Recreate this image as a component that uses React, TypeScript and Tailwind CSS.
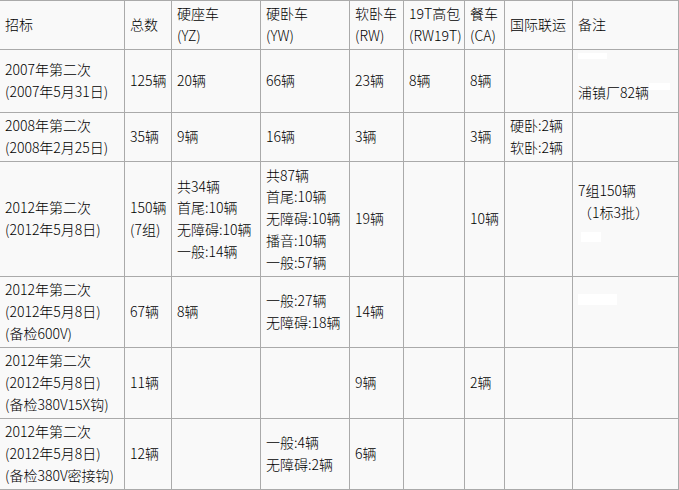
import React from 'react';

type Row = {
  h: string;
  cells: React.ReactNode[];
};

const Lines = ({ items }: { items: string[] }) => (
  <>
    {items.map((t, i) => (
      <div key={i}>{t}</div>
    ))}
  </>
);

const Blank = ({ className }: { className: string }) => <span className={`block bg-white ${className}`} />;

const headers: string[][] = [
  ['招标'],
  ['总数'],
  ['硬座车', '(YZ)'],
  ['硬卧车', '(YW)'],
  ['软卧车', '(RW)'],
  ['19T高包', '(RW19T)'],
  ['餐车', '(CA)'],
  ['国际联运'],
  ['备注'],
];

const rows: Row[] = [
  {
    h: 'h-[63px]',
    cells: [
      <Lines items={['2007年第二次', '(2007年5月31日)']} />,
      '125辆',
      '20辆',
      '66辆',
      '23辆',
      '8辆',
      '8辆',
      '',
      <div className="flex flex-col pb-[6px]">
        <Blank className="w-[29px] h-[6px] mb-[23px]" />
        <div className="flex items-start">
          <span>浦镇厂82辆</span>
          <Blank className="w-[21px] h-[7px] mt-[1px]" />
        </div>
      </div>,
    ],
  },
  {
    h: 'h-[49px]',
    cells: [
      <Lines items={['2008年第二次', '(2008年2月25日)']} />,
      '35辆',
      '9辆',
      '16辆',
      '3辆',
      '',
      '3辆',
      <Lines items={['硬卧:2辆', '软卧:2辆']} />,
      '',
    ],
  },
  {
    h: 'h-[115px]',
    cells: [
      <Lines items={['2012年第二次', '(2012年5月8日)']} />,
      <Lines items={['150辆', '(7组)']} />,
      <Lines items={['共34辆', '首尾:10辆', '无障碍:10辆', '一般:14辆']} />,
      <Lines items={['共87辆', '首尾:10辆', '无障碍:10辆', '播音:10辆', '一般:57辆']} />,
      '19辆',
      '',
      '10辆',
      '',
      <div className="flex flex-col pb-[16px]">
        <div>7组150辆</div>
        <div>（1标3批）</div>
        <Blank className="w-[20px] h-[10px] mt-[9px] ml-[3px]" />
      </div>,
    ],
  },
  {
    h: 'h-[71px]',
    cells: [
      <Lines items={['2012年第二次', '(2012年5月8日)', '(备检600V)']} />,
      '67辆',
      '8辆',
      <Lines items={['一般:27辆', '无障碍:18辆']} />,
      '14辆',
      '',
      '',
      '',
      <div className="flex flex-col pb-[25px]">
        <Blank className="w-[39px] h-[11px]" />
      </div>,
    ],
  },
  {
    h: 'h-[71px]',
    cells: [
      <Lines items={['2012年第二次', '(2012年5月8日)', '(备检380V15X钩)']} />,
      '11辆',
      '',
      '',
      '9辆',
      '',
      '2辆',
      '',
      '',
    ],
  },
  {
    h: 'h-[71px]',
    cells: [
      <Lines items={['2012年第二次', '(2012年5月8日)', '(备检380V密接钩)']} />,
      '12辆',
      '',
      <Lines items={['一般:4辆', '无障碍:2辆']} />,
      '6辆',
      '',
      '',
      '',
      '',
    ],
  },
];

const widths = ['w-[125px]', 'w-[47px]', 'w-[89px]', 'w-[89px]', 'w-[54px]', 'w-[61px]', 'w-[40px]', 'w-[68px]', 'w-[106px]'];

export default function App() {
  return (
    <div
      className="w-[679px] h-[490px] overflow-hidden bg-[#f9f9f9] text-black text-[14px] leading-[21.7px] font-light"
      style={{ fontFamily: '"Noto Sans CJK SC", "Liberation Sans", sans-serif' }}
    >
      <table className="table-fixed border-collapse ml-[-1px] w-[680px]">
        <colgroup>
          {widths.map((w, i) => (
            <col key={i} className={w} />
          ))}
        </colgroup>
        <thead>
          <tr className="h-[49px]">
            {headers.map((h, i) => (
              <th key={i} className="border border-[#aaaaaa] px-[5px] py-0 text-left font-light align-middle whitespace-nowrap">
                <Lines items={h} />
              </th>
            ))}
          </tr>
        </thead>
        <tbody>
          {rows.map((r, ri) => (
            <tr key={ri} className={r.h}>
              {r.cells.map((c, ci) => (
                <td
                  key={ci}
                  className={`border border-[#aaaaaa] py-0 align-middle whitespace-nowrap ${ci === 8 ? 'pl-[5px] pr-0' : 'px-[5px]'}`}
                >
                  {c}
                </td>
              ))}
            </tr>
          ))}
        </tbody>
      </table>
    </div>
  );
}
